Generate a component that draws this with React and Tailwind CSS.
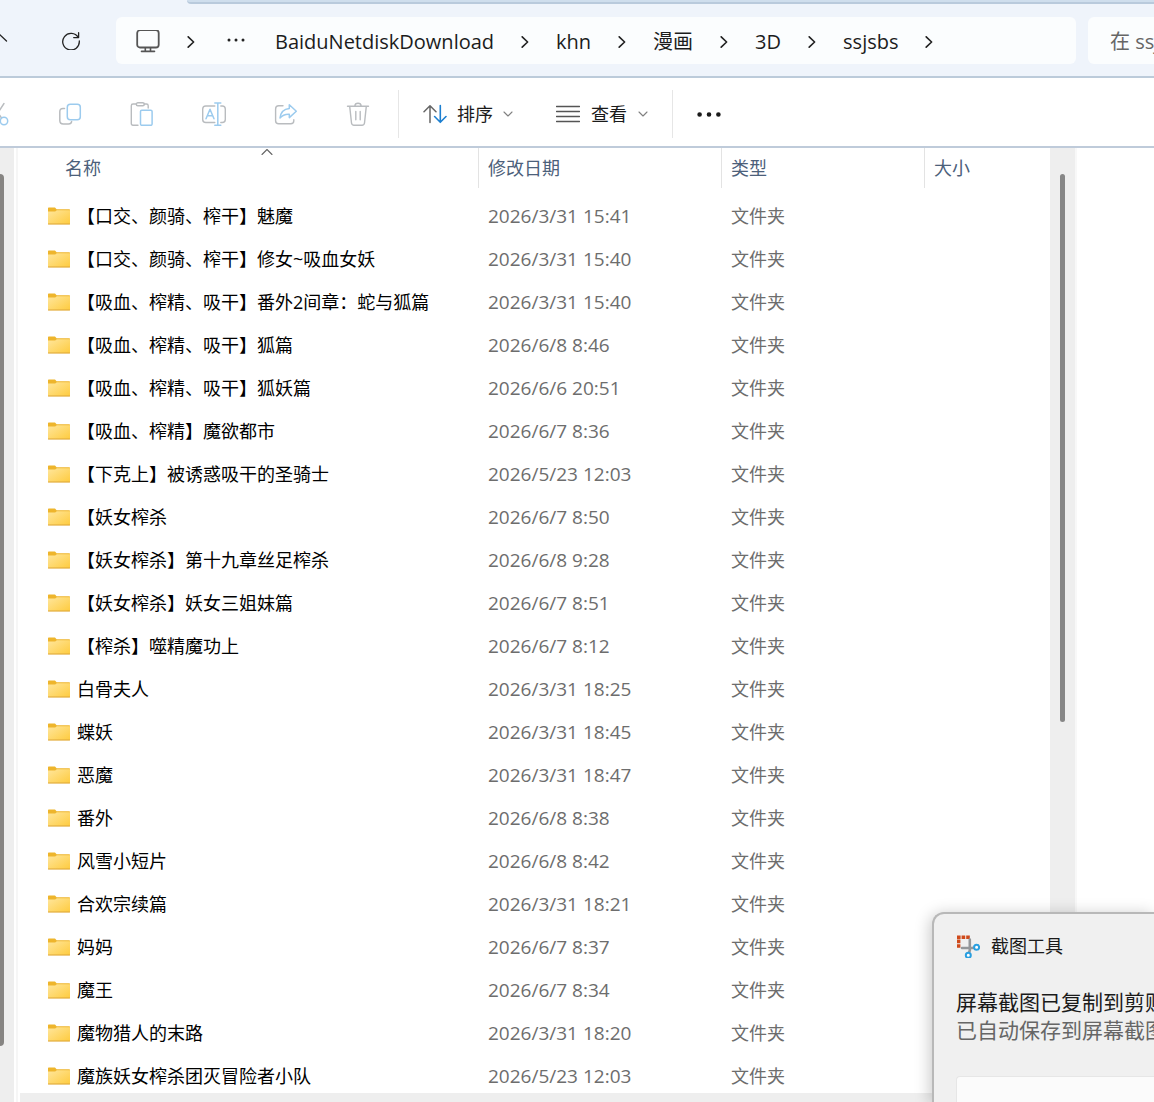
// App.jsx
import { Fragment } from "react";

const folders = [
  { name: "【口交、颜骑、榨干】魅魔", date: "2026/3/31 15:41" },
  { name: "【口交、颜骑、榨干】修女~吸血女妖", date: "2026/3/31 15:40" },
  { name: "【吸血、榨精、吸干】番外2间章：蛇与狐篇", date: "2026/3/31 15:40" },
  { name: "【吸血、榨精、吸干】狐篇", date: "2026/6/8 8:46" },
  { name: "【吸血、榨精、吸干】狐妖篇", date: "2026/6/6 20:51" },
  { name: "【吸血、榨精】魔欲都市", date: "2026/6/7 8:36" },
  { name: "【下克上】被诱惑吸干的圣骑士", date: "2026/5/23 12:03" },
  { name: "【妖女榨杀", date: "2026/6/7 8:50" },
  { name: "【妖女榨杀】第十九章丝足榨杀", date: "2026/6/8 9:28" },
  { name: "【妖女榨杀】妖女三姐妹篇", date: "2026/6/7 8:51" },
  { name: "【榨杀】噬精魔功上", date: "2026/6/7 8:12" },
  { name: "白骨夫人", date: "2026/3/31 18:25" },
  { name: "蝶妖", date: "2026/3/31 18:45" },
  { name: "恶魔", date: "2026/3/31 18:47" },
  { name: "番外", date: "2026/6/8 8:38" },
  { name: "风雪小短片", date: "2026/6/8 8:42" },
  { name: "合欢宗续篇", date: "2026/3/31 18:21" },
  { name: "妈妈", date: "2026/6/7 8:37" },
  { name: "魔王", date: "2026/6/7 8:34" },
  { name: "魔物猎人的末路", date: "2026/3/31 18:20" },
  { name: "魔族妖女榨杀团灭冒险者小队", date: "2026/5/23 12:03" },
];

const crumbs = ["BaiduNetdiskDownload", "khn", "漫画", "3D", "ssjsbs"];

const Icon = ({ children, className = "size-6", box = "0 0 24 24" }) => (
  <svg viewBox={box} className={`shrink-0 ${className}`} fill="none" strokeLinecap="round" strokeLinejoin="round" aria-hidden="true">
    {children}
  </svg>
);

const GRAY = "#b9bcbf";
const BLUE = "#9ccbee";

const ChevronRight = () => (
  <Icon className="h-3 w-2" box="0 0 8 12">
    <path d="M1.2 0.8 6.6 6 1.2 11.2" stroke="#222" strokeWidth="1.6" />
  </Icon>
);

const ChevronDown = () => (
  <Icon className="h-2 w-2.5" box="0 0 10 8">
    <path d="M1 2 5 6 9 2" stroke="#808080" strokeWidth="1.1" />
  </Icon>
);

const FolderIcon = () => (
  <Icon className="h-[18px] w-[22px]" box="0 0 22 18">
    <defs>
      <linearGradient id="folder" x1="0" y1="0" x2="1" y2="1">
        <stop offset="0" stopColor="#ffe69c" />
        <stop offset="1" stopColor="#fecb3e" />
      </linearGradient>
    </defs>
    <path d="M0 1.2Q0 .5.7.5H7l1.6 1.7H21.3Q22 2.2 22 2.9V5H0Z" fill="#eeb52c" />
    <path d="M0 4.6H7.2L8.8 3.2H22V16.6Q22 17.3 21.3 17.3H.7Q0 17.3 0 16.6Z" fill="url(#folder)" />
    <path d="M.4 17H21.6" stroke="#dda63a" strokeWidth="1" />
  </Icon>
);

const actions = [
  {
    label: "剪切",
    icon: (
      <>
        <path d="M6 1.5 15.5 16M18 1.5 8.5 16" stroke={GRAY} strokeWidth="1.4" />
        <circle cx="6.5" cy="19" r="3.7" stroke={BLUE} strokeWidth="1.5" />
        <circle cx="18" cy="19" r="3.7" stroke={BLUE} strokeWidth="1.5" />
      </>
    ),
  },
  {
    label: "复制",
    icon: (
      <>
        <path d="M6.5 6.5H5Q1.8 6.5 1.8 9.7V18.5Q1.8 22 5.3 22H10.5Q13.3 22 13.6 19.6" stroke={GRAY} strokeWidth="1.5" />
        <rect x="9.3" y="2.3" width="13" height="15.4" rx="3" stroke={BLUE} strokeWidth="1.5" />
      </>
    ),
  },
  {
    label: "粘贴",
    icon: (
      <>
        <path d="M8 23.2H3Q1.3 23.2 1.3 21.5V3.7Q1.3 2 3 2H6.2M14.3 2H16.5Q18.2 2 18.2 3.7V6" stroke={GRAY} strokeWidth="1.4" />
        <rect x="6.3" y=".8" width="8" height="3" rx="1.5" stroke={GRAY} strokeWidth="1.4" />
        <rect x="10.5" y="8.3" width="11.6" height="15" rx="1.3" stroke={BLUE} strokeWidth="1.5" />
      </>
    ),
  },
  {
    label: "重命名",
    icon: (
      <>
        <path d="M12.8 20.5H3.8Q.7 20.5.7 17.4V7.1Q.7 4 3.8 4H12.8M18.8 4H20.2Q23.3 4 23.3 7.1V17.4Q23.3 20.5 20.2 20.5H18.8" stroke={GRAY} strokeWidth="1.4" />
        <path d="M4 16.8 8 7.2 12 16.8M5.3 13.8H10.7M15.8 1.2V23M12.8 1H18.8M12.8 23.2H18.8" stroke={BLUE} strokeWidth="1.5" />
      </>
    ),
  },
  {
    label: "共享",
    icon: (
      <>
        <path d="M9 3.8H4.7Q1.6 3.8 1.6 6.9V18.7Q1.6 21.8 4.7 21.8H16.7Q19.8 21.8 19.8 18.7V17.8" stroke={GRAY} strokeWidth="1.4" />
        <path d="M15.3 2.7 22.3 9.2 15.3 15.6V12.2Q9.5 11.8 6 16Q7 7.2 15.3 6.4Z" stroke={BLUE} strokeWidth="1.5" />
      </>
    ),
  },
  {
    label: "删除",
    icon: (
      <>
        <path d="M1.5 4.2H22.5M8.8 4Q9 1.2 12 1.2T15.2 4M3.7 4.4 5.5 21Q5.8 23.2 8 23.2H16Q18.2 23.2 18.5 21L20.3 4.4M9.8 9.5V17.8M14.2 9.5V17.8" stroke={GRAY} strokeWidth="1.4" />
      </>
    ),
  },
];

const TopBar = () => (
  <header className="relative flex h-[78px] shrink-0 items-start gap-3 border-b-2 border-[#bccbda] bg-[#eff4fb] pt-[17px]">
    <div className="absolute left-[187px] right-0 top-0 h-1 rounded-bl border-b-2 border-[#b9cadc] bg-[#cfdeed]" />
    <nav className="flex h-12 w-[104px] shrink-0 items-center gap-[52px] overflow-hidden">
      <button aria-label="上一级" className="-ml-3.5 shrink-0">
        <Icon>
          <path d="M3.5 12 12 4 20.5 12M12 4V22" stroke="#222" strokeWidth="1.3" />
        </Icon>
      </button>
      <button aria-label="刷新" className="shrink-0">
        <Icon className="size-[18px]" box="0 0 18 18">
          <path d="M16.2 5.5A8.3 8.3 0 1 0 17.3 9M16.6.7V5.6H11.7" stroke="#222" strokeWidth="1.3" />
        </Icon>
      </button>
    </nav>
    <div className="flex h-[47px] min-w-0 flex-1 items-center gap-[27px] overflow-hidden rounded-md bg-[#fbfdfe] px-5 pt-0.5 text-[20px] leading-7 text-[#1c1c1c]">
      <button aria-label="此电脑" className="shrink-0">
        <Icon>
          <rect x="1.2" y="0.2" width="21.5" height="17.3" rx="2.8" stroke="#555" strokeWidth="1.8" />
          <path d="M9.3 18V21M14.5 18V21M5.5 21.4H18.5" stroke="#555" strokeWidth="1.6" />
        </Icon>
      </button>
      <ChevronRight />
      <button aria-label="更多路径" className="shrink-0">
        <Icon className="h-6 w-[26px]" box="-5 0 26 24">
          <path d="M2 10h.01M9 10h.01M16 10h.01" stroke="#222" strokeWidth="3" />
        </Icon>
      </button>
      {crumbs.map((crumb) => (
        <Fragment key={crumb}>
          <a href="#" className="shrink-0">{crumb}</a>
          <ChevronRight />
        </Fragment>
      ))}
    </div>
    <div className="h-[47px] w-[66px] shrink-0 rounded-l-md bg-[#fbfdfe]">
      <input
        aria-label="搜索"
        placeholder="在 ssjsbs 中搜索"
        className="h-full w-full bg-transparent pl-[22px] pt-0.5 text-[20px] text-[#1c1c1c] outline-none placeholder:text-[#666]"
      />
    </div>
  </header>
);

const Toolbar = () => (
  <div className="flex h-[70px] shrink-0 items-center overflow-hidden border-b-2 border-[#bfcbda] bg-white pt-1 text-lg leading-7 text-[#1a1a1a]">
    <div className="-ml-3.5 flex shrink-0 gap-12">
      {actions.map(({ label, icon }) => (
        <button key={label} aria-label={label}>
          <Icon>{icon}</Icon>
        </button>
      ))}
    </div>
    <div className="ml-7 flex h-12 shrink-0 items-center gap-[43px] border-x border-[#e6e6e6] px-6">
      <button className="flex items-center gap-2.5">
        <Icon>
          <path d="M7 20.5V4M1 9.7 7 3.7 13 9.7" stroke="#666" strokeWidth="1.5" />
          <path d="M17.3 3.5V20M11.6 14.5 17.3 20.3 23 14.5" stroke="#1c7fd0" strokeWidth="1.6" />
        </Icon>
        排序
        <ChevronDown />
      </button>
      <button className="flex items-center gap-[11px]">
        <Icon>
          <path d="M.5 4.5H23.5M.5 9.5H23.5M.5 14.5H23.5M.5 19.5H23.5" stroke="#555" strokeWidth="1.5" />
        </Icon>
        查看
        <ChevronDown />
      </button>
    </div>
    <button aria-label="更多" className="ml-6 shrink-0">
      <Icon>
        <path d="M2.6 12.5h.01M12 12.5h.01M21.4 12.5h.01" stroke="#1a1a1a" strokeWidth="4.6" />
      </Icon>
    </button>
  </div>
);

const FileTable = () => (
  <table className="w-full table-fixed border-collapse text-left text-lg">
    <colgroup>
      <col className="w-[459px]" />
      <col className="w-[243px]" />
      <col className="w-[203px]" />
      <col />
    </colgroup>
    <thead className="leading-6 text-[#4c607a]">
      <tr className="h-[46px] align-top">
        <th className="p-0 font-normal">
          <button className="relative flex h-10 w-full items-center border-r border-[#e3e3e3] pl-[45px]">
            名称
            <span className="absolute left-1/2 top-0 -translate-x-1/2 pl-9">
              <Icon className="h-2 w-3" box="0 0 12 8">
                <path d="M1 6.5 6 1.5 11 6.5" stroke="#666" strokeWidth="1.1" />
              </Icon>
            </span>
          </button>
        </th>
        <th className="p-0 font-normal">
          <button className="flex h-10 w-full items-center border-r border-[#e3e3e3] pl-[9px]">修改日期</button>
        </th>
        <th className="p-0 font-normal">
          <button className="flex h-10 w-full items-center border-r border-[#e3e3e3] pl-[9px]">类型</button>
        </th>
        <th className="p-0 font-normal">
          <button className="flex h-10 w-full items-center pl-[9px]">大小</button>
        </th>
      </tr>
    </thead>
    <tbody className="leading-6 text-[#6d6d6d]">
      {folders.map((folder) => (
        <tr key={folder.name} className="h-[43px]">
          <td className="p-0 pl-7">
            <div className="flex items-center gap-[7px] whitespace-nowrap text-black">
              <FolderIcon />
              {folder.name}
            </div>
          </td>
          <td className="p-0 pl-[9px] text-[19px]">{folder.date}</td>
          <td className="p-0 pl-[9px]">文件夹</td>
          <td className="p-0" />
        </tr>
      ))}
    </tbody>
  </table>
);

const Toast = () => (
  <aside className="absolute bottom-0 right-0 h-[190px] w-[222px] overflow-hidden whitespace-nowrap rounded-tl-xl border-l-2 border-t-2 border-[#b8b8b8] bg-[#f0f0f0] pl-[22px] pt-5 text-[#1a1a1a] shadow-[-2px_2px_16px_rgba(0,0,0,0.22)]">
    <div className="flex items-center gap-[11px] text-lg leading-6">
      <Icon>
        <path d="M1 3.2H14" stroke="#cf4a1b" strokeWidth="3.4" strokeLinecap="butt" strokeDasharray="3.6 1" />
        <path d="M2.7 5.6V14.5" stroke="#cf4a1b" strokeWidth="3.4" strokeLinecap="butt" strokeDasharray="3.6 1" />
        <path d="M13.8 5.5V16.5L12.8 19M6 14H16L19 13.4" stroke="#94979a" strokeWidth="2.6" />
        <circle cx="20.6" cy="13.3" r="2.5" stroke="#2a9fe0" strokeWidth="2" fill="#fff" />
        <circle cx="12.3" cy="21.2" r="2.5" stroke="#2a9fe0" strokeWidth="2" fill="#fff" />
      </Icon>
      截图工具
    </div>
    <p className="mt-[30px] text-[21px] leading-7">屏幕截图已复制到剪贴板</p>
    <p className="text-[21px] leading-7 text-[#666]">已自动保存到屏幕截图文件夹</p>
    <button aria-label="标记和共享" className="mt-8 h-14 w-full rounded-tl border-l border-t border-[#e6e6e6] bg-[#fbfbfb]" />
  </aside>
);

const App = () => {
  return (
    <div className="relative flex h-screen flex-col overflow-hidden bg-white font-['Open_Sans','Noto_Sans_CJK_SC',sans-serif]">
      <TopBar />
      <Toolbar />
      <main className="flex min-h-0 flex-1">
        <div className="w-3.5 shrink-0 bg-[#eeeeee] pt-[26px]">
          <div className="h-[94%] w-1 rounded-r-sm bg-[#868482]" />
        </div>
        <div className="w-1.5 shrink-0 border-x-2 border-white bg-[#f6f6f6]" />
        <section className="flex min-w-0 flex-1 flex-col">
          <div className="min-h-0 flex-1 overflow-hidden">
            <FileTable />
          </div>
          <div className="h-[9px] shrink-0 bg-[#eeeeee]" />
        </section>
        <div className="w-[25px] shrink-0 bg-[#eeeeee] pl-2.5 pt-[26px]">
          <div className="h-[59%] w-[5px] rounded-full bg-[#868686]" />
        </div>
        <div className="w-[79px] shrink-0 border-l-2 border-[#f8f8f8]" />
      </main>
      <Toast />
    </div>
  );
};

export default App;
